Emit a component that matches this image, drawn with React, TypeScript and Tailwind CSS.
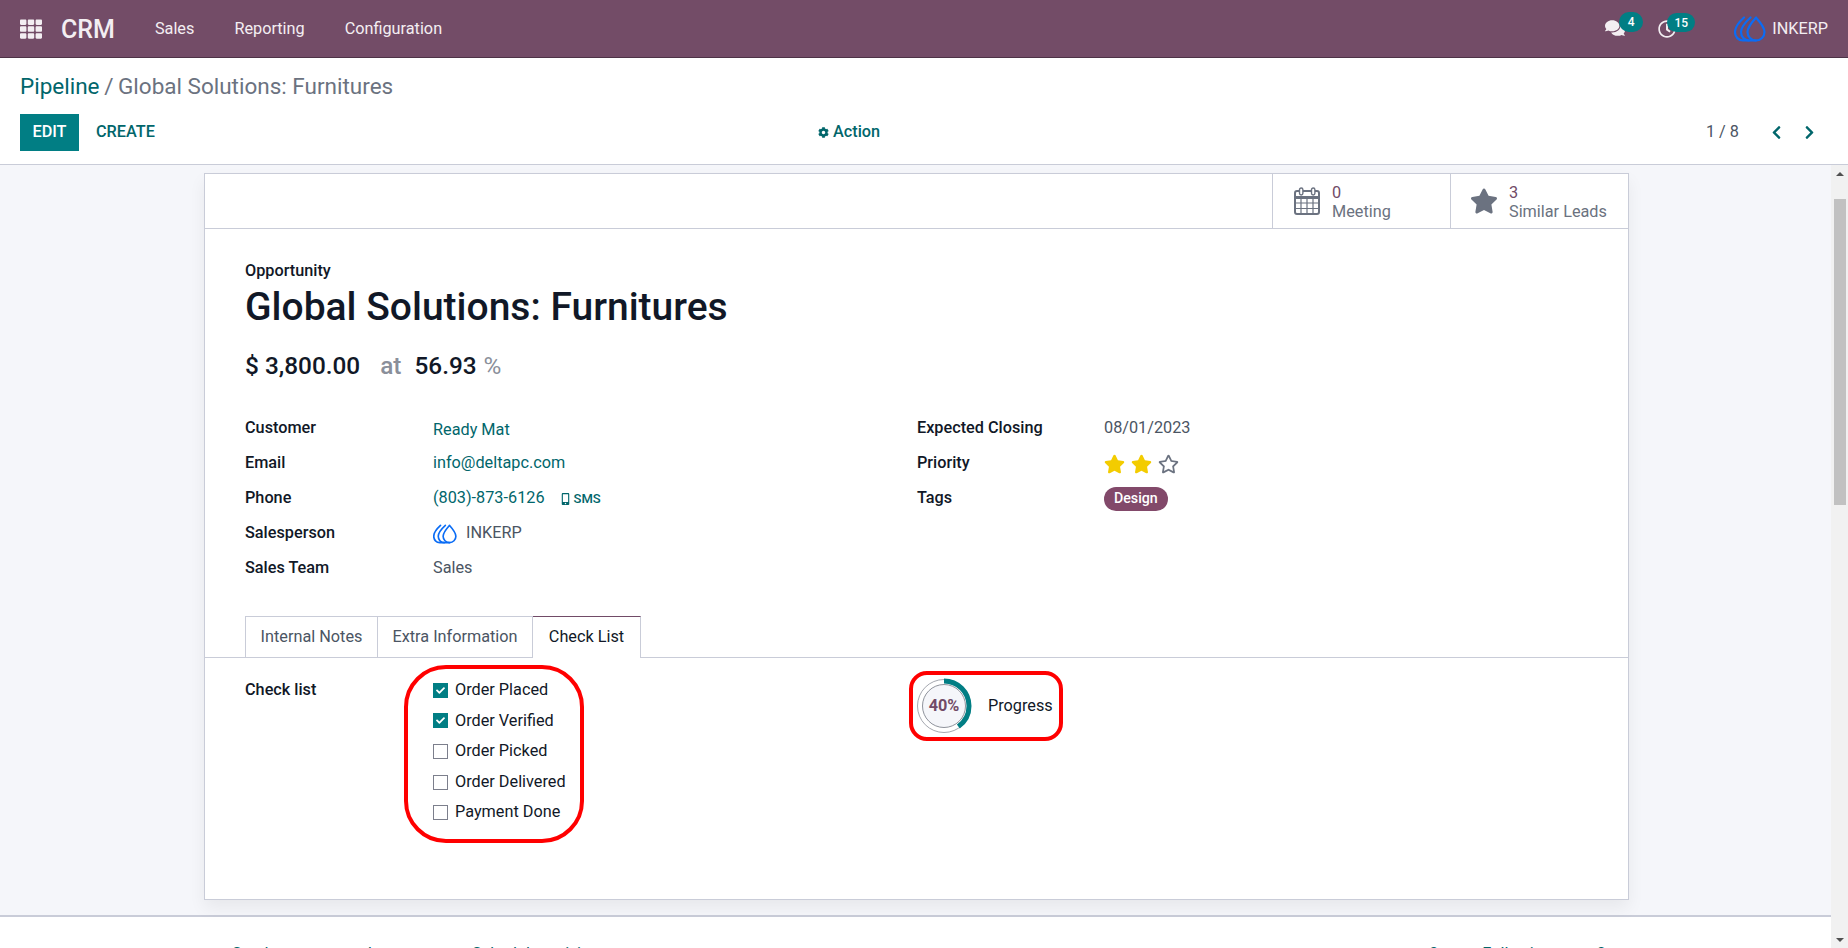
import React from 'react';
import { FaTh, FaComments, FaRegClock, FaCog, FaStar, FaRegStar, FaMobileAlt, FaChevronLeft, FaChevronRight, FaCheck, FaPaperclip, FaUser } from 'react-icons/fa';

// three nested drops, the INKERP logo
const InkLogo = ({ className }: { className: string }) => (
  <svg viewBox="0 0 32 26" className={className} fill="none" stroke="#0a6cf5" strokeWidth="2.2" strokeLinecap="round" strokeLinejoin="round">
    <path d="M22 1.5 C18 6 13.5 11 13.5 16 A8.5 8.5 0 0 0 30.5 16 C30.5 11 26 6 22 1.5 Z" />
    <path d="M16.5 1.5 C10.5 7 7 11 7 16 C7 21 10.5 24.5 15 24.5" />
    <path d="M10 1.5 C4 7 1 11 1 16 C1 21 4.5 24.5 9 24.5 L22 24.5" />
  </svg>
);

const CalendarIcon = () => (
  <svg viewBox="0 0 26 28" className="w-[26px] h-[28px]" fill="none" stroke="#6b7280">
    <rect x="1" y="4" width="24" height="23" rx="2" strokeWidth="2" />
    <path d="M1 10.5 H25" strokeWidth="3" />
    <path d="M1 16 H25 M1 21.5 H25 M7 10 V27 M13 10 V27 M19 10 V27" strokeWidth="1.2" />
    <rect x="5.5" y="1" width="3.4" height="7" rx="1.7" fill="#fff" strokeWidth="1.4" />
    <rect x="17.5" y="1" width="3.4" height="7" rx="1.7" fill="#fff" strokeWidth="1.4" />
  </svg>
);

const Field = ({ label, narrow, children }: { label: string; narrow?: boolean; children: React.ReactNode }) => (
  <div className="flex h-[35px] items-center">
    <div className={`${narrow ? 'w-[187px]' : 'w-[188px]'} font-medium text-[#111827]`}>{label}</div>
    <div className="flex items-center text-[#4b5563]">{children}</div>
  </div>
);

const checks = [
  { label: 'Order Placed', done: true },
  { label: 'Order Verified', done: true },
  { label: 'Order Picked', done: false },
  { label: 'Order Delivered', done: false },
  { label: 'Payment Done', done: false },
];

const App: React.FC = () => {
  return (
    <div className="h-screen flex flex-col overflow-hidden bg-white font-['Roboto',sans-serif] text-[16.25px] text-[#111827]">
      {/* Navbar */}
      <header className="h-[58px] shrink-0 flex items-center bg-[#734c67] border-b border-[#4d3246] text-[#f3eef2] pt-[1px] pl-[20px] pr-[20px]">
        <FaTh className="w-[22px] h-[22px] text-[#f3eef2]" />
        <span className="ml-[19px] text-[25px] font-medium leading-none">CRM</span>
        <span className="ml-[40px]">Sales</span>
        <span className="ml-[40px]">Reporting</span>
        <span className="ml-[40px]">Configuration</span>
        <div className="ml-auto flex items-center">
          <div className="relative w-[20px] h-[20px] mr-[33px]">
            <FaComments className="w-[20px] h-[20px] -mt-[1px]" />
            <span className="absolute left-[14px] -top-[7px] w-[24px] h-[20px] rounded-full bg-[#017e84] text-white text-[12px] font-medium flex items-center justify-center">4</span>
          </div>
          <div className="relative w-[18px] h-[18px] mr-[58px]">
            <FaRegClock className="w-[18px] h-[18px]" />
            <span className="absolute left-[9px] -top-[7px] w-[28px] h-[19px] rounded-full bg-[#017e84] text-white text-[12px] font-medium flex items-center justify-center">15</span>
          </div>
          <InkLogo className="w-[32px] h-[26px]" />
          <span className="ml-[6px]">INKERP</span>
        </div>
      </header>

      {/* Control panel */}
      <section className="h-[107px] shrink-0 border-b border-[#c9ccd8] px-[20px] pt-[14px]">
        <div className="text-[22.5px] leading-[28px] text-[#6b7280]">
          <span className="text-[#01666b]">Pipeline</span> <span className="-mx-[1px]">/</span> Global Solutions: Furnitures
        </div>
        <div className="mt-[14px] flex items-center">
          <div className="w-[798px] flex items-center">
            <button className="w-[59px] h-[37px] bg-[#017e84] text-white font-medium">EDIT</button>
            <button className="ml-[17px] text-[#01666b] font-medium">CREATE</button>
          </div>
          <div className="flex items-center text-[#01666b] font-medium">
            <FaCog className="w-[11px] h-[11px] mr-[4px]" />
            Action
          </div>
          <div className="ml-auto flex items-center text-[#4b5563]">
            <span>1 / 8</span>
            <FaChevronLeft className="ml-[31px] w-[13px] h-[15px] text-[#01666b]" />
            <FaChevronRight className="ml-[20px] mr-[12px] w-[13px] h-[15px] text-[#01666b]" />
          </div>
        </div>
      </section>

      <div className="flex-1 min-h-0 flex">
        <main className="flex-1 min-w-0 flex flex-col">
          {/* Sheet area */}
          <div className="h-[752px] shrink-0 bg-[#f5f6fa] border-b-2 border-[#c9ccd8] pt-[8px] pl-[204px]">
            <div className="w-[1425px] h-[727px] bg-white border border-[#c9ccd8] shadow-[0_8px_16px_rgba(0,0,0,0.06)]">
              {/* Stat buttons */}
              <div className="h-[55px] border-b border-[#c9ccd8] flex justify-end">
                <div className="w-[178px] border-l border-[#c9ccd8] flex items-center pl-[21px]">
                  <CalendarIcon />
                  <div className="ml-[12px] mt-[2px] leading-[19px] text-[#6b7280]">
                    <div className="text-[#714b67]">0</div>
                    <div>Meeting</div>
                  </div>
                </div>
                <div className="w-[178px] border-l border-[#c9ccd8] flex items-center pl-[19px]">
                  <FaStar className="w-[28px] h-[26px] text-[#6b7280]" />
                  <div className="ml-[11px] mt-[2px] leading-[19px] text-[#6b7280]">
                    <div className="text-[#714b67]">3</div>
                    <div>Similar Leads</div>
                  </div>
                </div>
              </div>

              {/* Title block */}
              <div className="pl-[40px] pt-[32px]">
                <div className="font-medium leading-[20px]">Opportunity</div>
                <h1 className="mt-[2px] text-[39px] leading-[48px] font-medium text-[#111827]">Global Solutions: Furnitures</h1>
                <div className="mt-[17px] flex items-baseline text-[24.375px] leading-[36px] font-medium">
                  <span>$ 3,800.00</span>
                  <span className="ml-[20px] text-[#8a8f9a]">at</span>
                  <span className="ml-[13px]">56.93</span>
                  <span className="ml-[7px] font-normal text-[#8a8f9a]">%</span>
                </div>
              </div>

              {/* Fields */}
              <div className="mt-[27px] pl-[40px] flex">
                <div className="w-[672px]">
                  <Field label="Customer"><span className="mt-[3px] text-[#01666b]">Ready Mat</span></Field>
                  <Field label="Email"><span className="text-[#01666b]">info@deltapc.com</span></Field>
                  <Field label="Phone">
                    <span className="text-[#01666b]">(803)-873-6126</span>
                    <FaMobileAlt className="ml-[15px] w-[11px] h-[12px] text-[#01666b]" />
                    <span className="ml-[3px] text-[#01666b] text-[13px] font-medium">SMS</span>
                  </Field>
                  <Field label="Salesperson">
                    <InkLogo className="w-[24px] h-[20px]" />
                    <span className="ml-[9px]">INKERP</span>
                  </Field>
                  <Field label="Sales Team">Sales</Field>
                </div>
                <div>
                  <Field narrow label="Expected Closing">08/01/2023</Field>
                  <Field narrow label="Priority">
                    <FaStar className="w-[21px] h-[20px] text-[#f3cc00]" />
                    <FaStar className="ml-[6px] w-[21px] h-[20px] text-[#f3cc00]" />
                    <FaRegStar className="ml-[6px] w-[21px] h-[20px] text-[#6b7280]" />
                  </Field>
                  <Field narrow label="Tags">
                    <span className="h-[24px] px-[10px] rounded-full bg-[#82496a] text-white text-[14.2px] font-medium flex items-center">Design</span>
                  </Field>
                </div>
              </div>

              {/* Tabs */}
              <div className="mt-[30px] h-[42px] border-b border-[#c9ccd8] pl-[40px] flex">
                <div className="w-[133px] h-[42px] border border-[#c9ccd8] border-b-0 flex items-center justify-center text-[#4b5563]">Internal Notes</div>
                <div className="w-[155px] h-[42px] border-r border-t border-[#c9ccd8] flex items-center justify-center text-[#4b5563]">Extra Information</div>
                <div className="w-[108px] h-[42px] bg-white border-r border-[#c9ccd8] border-t border-t-[#714b67] flex items-center justify-center text-[#111827]">Check List</div>
              </div>

              {/* Check list tab */}
              <div className="pl-[40px] pt-[17px] flex">
                <div className="w-[188px] font-medium leading-[30px]">Check list</div>
                <div className="relative w-[483px]">
                  <div className="absolute -left-[29px] -top-[10px] w-[180px] h-[178px] rounded-[42px] border-[4px] border-[#ff0000]" />
                  {checks.map(c => (
                    <div key={c.label} className="h-[30.6px] flex items-center">
                      {c.done ? (
                        <span className="w-[15px] h-[15px] bg-[#017e84] flex items-center justify-center">
                          <FaCheck className="w-[9px] h-[9px] text-white" />
                        </span>
                      ) : (
                        <span className="w-[15px] h-[15px] bg-white border border-[#7c7f8c]" />
                      )}
                      <span className="ml-[7px]">{c.label}</span>
                    </div>
                  ))}
                </div>
                <div className="relative flex items-center h-[56px] mt-[3px]">
                  <div className="absolute -left-[7px] -top-[7px] w-[154px] h-[70px] rounded-[18px] border-[4px] border-[#ff0000]" />
                  <div className="relative w-[56px] h-[56px] flex items-center justify-center">
                    <svg viewBox="0 0 56 56" className="absolute inset-0 w-[56px] h-[56px]">
                      <circle cx="28" cy="28" r="21.5" fill="#f5f6fa" stroke="#8f939c" strokeWidth="1" />
                      <circle cx="28" cy="28" r="26.5" fill="none" stroke="#a5a8b0" strokeWidth="1" />
                      <circle cx="28" cy="28" r="25" fill="none" stroke="#017e84" strokeWidth="5" strokeDasharray="62.8 157" transform="rotate(-90 28 28)" />
                    </svg>
                    <span className="relative font-bold text-[#714b67]">40%</span>
                  </div>
                  <span className="ml-[16px]">Progress</span>
                </div>
              </div>
            </div>
          </div>

          {/* Chatter, cut off by the window */}
          <div className="pt-[27px] flex text-[#01666b] leading-[20px] pl-[232px] pr-[225px]">
            <span>Send message</span>
            <span className="ml-[29px]">Log note</span>
            <span className="ml-[23px] flex items-center"><FaRegClock className="w-[12px] h-[12px] mr-[6px]" />Schedule activity</span>
            <span className="ml-auto flex items-center"><FaPaperclip className="w-[12px] h-[12px] mr-[6px]" />0</span>
            <span className="ml-[44px]">Following</span>
            <span className="ml-[27px] flex items-center"><FaUser className="w-[12px] h-[12px] mr-[6px]" />0</span>
          </div>
        </main>

        {/* Scrollbar */}
        <div className="w-[17px] shrink-0 bg-[#f1f1f1] flex flex-col items-center">
          <div className="h-[17px] flex items-center justify-center">
            <div className="w-0 h-0 border-x-[4px] border-x-transparent border-b-[4px] border-b-[#505050]" />
          </div>
          <div className="mt-[17px] w-[12px] h-[306px] bg-[#c1c1c1]" />
          <div className="mt-auto h-[17px] flex items-center justify-center">
            <div className="w-0 h-0 border-x-[4px] border-x-transparent border-t-[4px] border-t-[#505050]" />
          </div>
        </div>
      </div>
    </div>
  );
};

export default App;
